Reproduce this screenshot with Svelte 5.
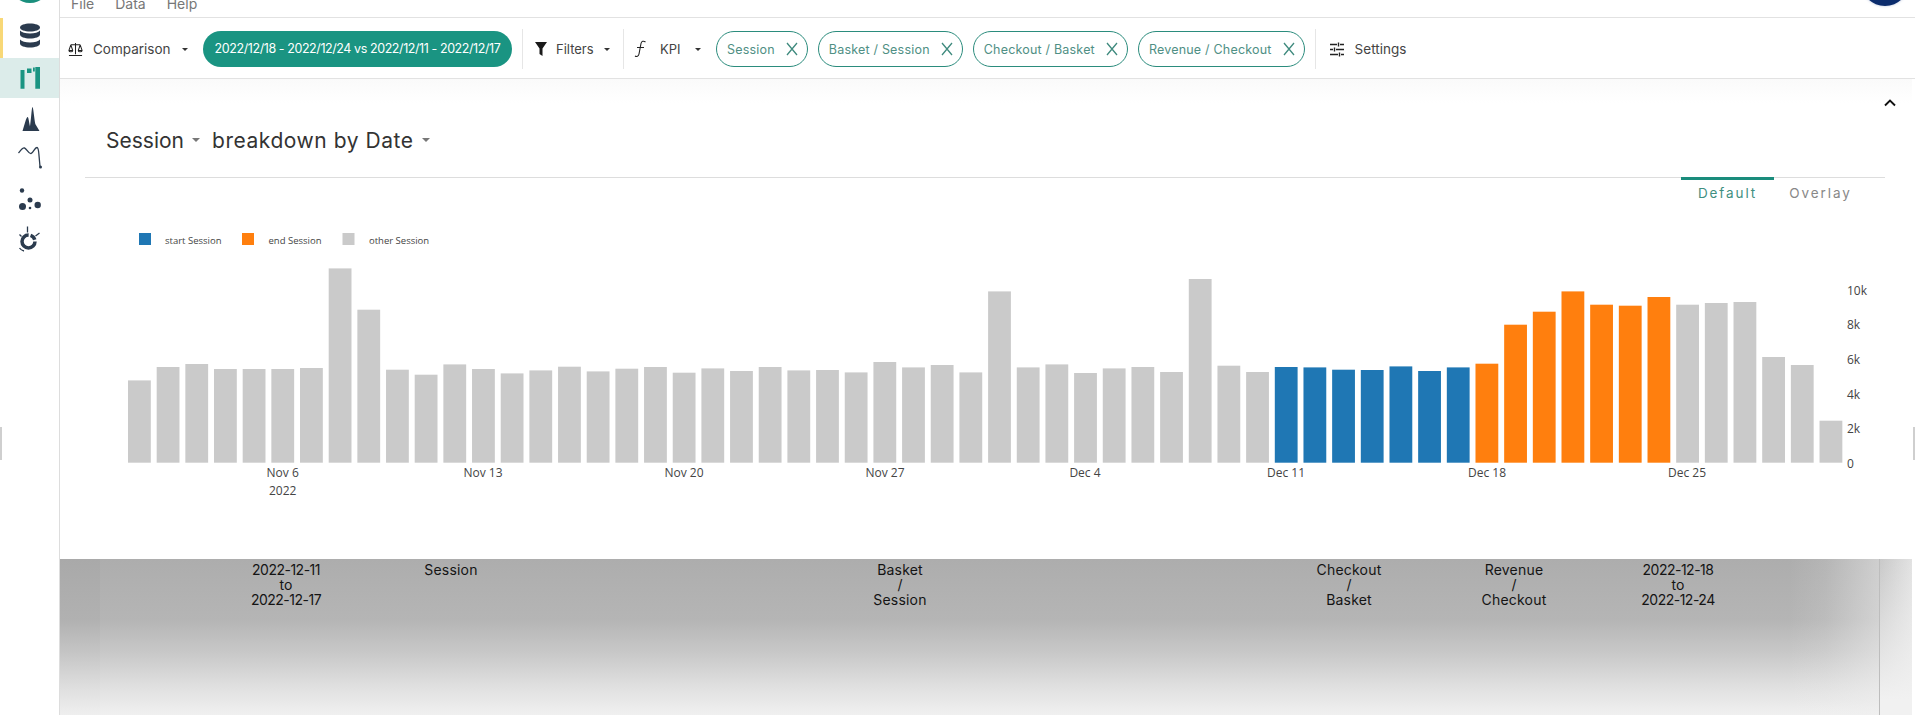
<script>
  const h = [82.3,95.7,98.7,93.7,93.7,93.7,94.7,194.3,153,93,88,98.3,93.7,89.3,92.3,96,91.3,94,95.7,90,94.3,91.7,95.7,92.3,92.7,90.3,100.7,95.3,97.7,90.3,171.3,95.3,98.3,89.7,94.3,95.7,90.7,183.7,97,90.7,95.7,95.3,93,92.7,96.3,91.7,95.3,99,138,151,171.3,158,157,165.7,158,159.7,160.7,105.7,97.7,42];
  const base = 462.7;
  const bars = h.map((v, i) => ({
    x: 128 + i * 28.67,
    y: base - v,
    h: v,
    c: i >= 40 && i <= 46 ? 'blue' : i >= 47 && i <= 53 ? 'orange' : 'grey'
  }));
  const xticks = [['Nov 6', 282.7], ['Nov 13', 483], ['Nov 20', 684], ['Nov 27', 885], ['Dec 4', 1085], ['Dec 11', 1286], ['Dec 18', 1487], ['Dec 25', 1687]];
  const yticks = [['10k', 290], ['8k', 324.7], ['6k', 359.4], ['4k', 394.1], ['2k', 428.8], ['0', 463.5]];
  const chips = ['Session', 'Basket / Session', 'Checkout / Basket', 'Revenue / Checkout'];
  const headers = [['2022-12-11', 'to', '2022-12-17'], ['Session'], ['Basket', '/', 'Session'], ['Checkout', '/', 'Basket'], ['Revenue', '/', 'Checkout'], ['2022-12-18', 'to', '2022-12-24']];
</script>

<div class="page">
  <nav class="side">
    <div class="logo"><span class="logo-disc"></span></div>
    <div class="item marked">
      <svg viewBox="0 18 60 40" class="ic">
        <path class="navy" d="M20 27.5c0-2.4 4.5-4 10-4s10 1.600 10 4-4.500 4-10 4-10-1.600-10-4z"/>
        <path class="navy" d="M20 30.500c1.500 2 5.500 3 10 3s8.500-1 10-3v4c0 2.400-4.500 4-10 4s-10-1.600-10-4z"/>
        <path class="navy" d="M20 39.500c1.500 2 5.500 3 10 3s8.500-1 10-3v4c0 2.400-4.500 4-10 4s-10-1.600-10-4z"/>
      </svg>
    </div>
    <div class="item active">
      <svg viewBox="0 58 60 40" class="ic">
        <path class="teal" d="M20.500 70h4v18.700h-4zM27 68.500h4.500v4.500H27zM33 67.500h1.800v4H33zM35.300 67h4.700v21.700h-4.700z"/>
      </svg>
    </div>
    <div class="item">
      <svg viewBox="0 98 60 40" class="ic">
        <path class="navy" d="M22.500 131l2.700-9c1-3.500 1.800-5 2.500-5 .7 0 1.200 4 2.300 9.500 .9-5 1.700-19.500 2.500-19.500 .8 0 1.800 12 2.800 17l4.200 7z"/>
      </svg>
    </div>
    <div class="item">
      <svg viewBox="0 138 60 40" class="ic">
        <path class="thin" d="M18.500 153c2-2.500 4-5.500 6-5 2.200.6 4 6 6.500 5.500 2.500-.5 3.500-6 6-6 1.500 0 1.700 4 2 8l1 11"/>
        <circle class="navy" cx="40.500" cy="167" r="1.500"/>
      </svg>
    </div>
    <div class="item">
      <svg viewBox="0 178 60 40" class="ic">
        <circle class="navy" cx="22" cy="190.500" r="2.200"/>
        <circle class="navy" cx="22.500" cy="206.500" r="3.500"/>
        <circle class="navy" cx="30" cy="200" r="2.500"/>
        <circle class="navy" cx="30" cy="208" r="1.300"/>
        <circle class="navy" cx="37.700" cy="205" r="3.200"/>
      </svg>
    </div>
    <div class="item">
      <svg viewBox="0 218 60 40" class="ic">
        <circle class="ring" cx="28.500" cy="241.500" r="6.500"/>
        <path class="thin" d="M27.500 226.500v6M35.500 236l4-3M19.500 234.500l2 2M19.500 248c1 1.500 2.500 2.500 4.500 3"/>
      </svg>
    </div>
  </nav>

  <main class="main">
    <div class="menubar">
      <div class="menus"><span>File</span><span>Data</span><span>Help</span></div>
      <span class="avatar"></span>
    </div>

    <div class="toolbar">
      <svg class="tool-ic scale" viewBox="0 0 16 16">
        <path class="line" d="M8 1v12M3 3h10M3 3l-2 6M3 3l2 6M13 3l-2 6M13 3l2 6M1 9c0 2 4 2 4 0zM11 9c0 2 4 2 4 0zM1 14.500h14"/>
      </svg>
      <span class="lbl cmp">Comparison</span>
      <span class="caret"></span>
      <span class="pill">2022/12/18 - 2022/12/24 vs 2022/12/11 - 2022/12/17</span>
      <span class="sep s1"></span>
      <svg class="tool-ic funnel" viewBox="0 0 12 16">
        <path d="M0 1h12L7.500 7.500V15l-3-2V7.500z" fill="#1a1a1a"/>
      </svg>
      <span class="lbl flt">Filters</span>
      <span class="caret"></span>
      <span class="sep s2"></span>
      <svg class="tool-ic fx" viewBox="0 0 13 18">
        <path class="line" d="M11.500 2c-2-1.500-4-.8-4.500 1.500L5 14c-.5 2.500-2.500 3-4 2M3 7.500h7"/>
      </svg>
      <span class="lbl kpi">KPI</span>
      <span class="caret"></span>
      <div class="chips">
        {#each chips as chip}
          <span class="chip">
            <span>{chip}</span>
            <svg class="x" viewBox="0 0 12 14"><path d="M1 1l10 12M11 1L1 13"/></svg>
          </span>
        {/each}
      </div>
      <span class="sep s3"></span>
      <svg class="tool-ic sliders" viewBox="0 0 14 15">
        <path class="line bold" d="M0 2.500h7M10 2.500h4M8.500 .5v4M0 7.500h3M6 7.500h8M4.500 5.500v4M0 12.500h8M11 12.500h3M9.500 10.500v4"/>
      </svg>
      <span class="lbl set">Settings</span>
    </div>

    <section class="panel">
      <div class="collapse">
        <svg viewBox="0 0 12 8"><path d="M1 6.500l5-5 5 5"/></svg>
      </div>
      <div class="title">
        <span>Session</span><span class="tcaret"></span>
        <span class="second">breakdown by Date</span><span class="tcaret"></span>
      </div>
      <div class="divider"></div>
      <div class="tabs">
        <span class="tab on">Default</span>
        <span class="tab">Overlay</span>
      </div>
      <svg class="chart" viewBox="60 211 1855 348">
        <rect class="blue" x="139" y="233" width="12" height="12"/>
        <text class="leg" x="165" y="243.500">start Session</text>
        <rect class="orange" x="242" y="233" width="12" height="12"/>
        <text class="leg" x="268.500" y="243.500">end Session</text>
        <rect class="grey" x="342.500" y="233" width="12" height="12"/>
        <text class="leg" x="369" y="243.500">other Session</text>
        {#each bars as b}
          <rect class={b.c} x={b.x} y={b.y} width="22.800" height={b.h}/>
        {/each}
        {#each xticks as t}
          <text class="tick" x={t[1]} y="477" text-anchor="middle">{t[0]}</text>
        {/each}
        <text class="tick" x="282.700" y="494.500" text-anchor="middle">2022</text>
        {#each yticks as t}
          <text class="tick" x="1847" y={t[1] + 4.500}>{t[0]}</text>
        {/each}
      </svg>
    </section>

    <div class="backdrop">
      <div class="strip-l"></div>
      <div class="heads">
        {#each headers as lines}
          <div class="head">
            {#each lines as l}<div class:date={/\d/.test(l)}>{l}</div>{/each}
          </div>
        {/each}
      </div>
      <div class="strip-r"></div>
    </div>
  </main>

  <span class="handle hl"></span>
  <span class="handle hr"></span>
</div>

<style>
  :global(body) { margin: 0; background: #fff; }
  .page {
    position: relative;
    display: flex;
    width: 1918px;
    height: 715px;
    overflow: hidden;
    background: #fff;
    font-family: Inter, "Noto Sans", sans-serif;
    color: #333;
  }
  .side { width: 60px; flex: none; display: flex; flex-direction: column; }
  .logo { height: 18px; overflow: hidden; }
  .logo-disc { display: block; width: 40px; height: 40px; margin: -37px 0 0 10px; border-radius: 50%; background: #1a8f7d; }
  .item { height: 40px; }
  .item.marked { box-shadow: inset 3px 0 0 #f8d877; }
  .item.active { background: #dcecea; }
  .ic { display: block; width: 60px; height: 40px; }
  .navy { fill: #2b3b4e; }
  .teal { fill: #1a9482; }
  .thin { fill: none; stroke: #2b3b4e; stroke-width: 1.3; }
  .ring { fill: none; stroke: #2b3b4e; stroke-width: 3.5; stroke-dasharray: 30 2 6 3; }

  .main { flex: none; width: 1855px; display: flex; flex-direction: column; border-left: 1px solid #ddd; margin-left: -1px; height: 715px; }
  .menubar { height: 17px; flex: none; border-bottom: 1px solid #e2e2e2; display: flex; justify-content: space-between; overflow: hidden; }
  .menus { display: flex; gap: 21px; margin: -4px 0 0 11px; line-height: 16px; font-size: 14px; color: #777; height: 21px; }
  .avatar { width: 48px; height: 48px; border-radius: 50%; background: #0b2c6c; margin: -42px 6px 0 0; box-shadow: 0 0 3px #b8c4dc; }

  .toolbar { height: 58px; padding-top: 2px; flex: none; display: flex; align-items: center; border-bottom: 1px solid #e2e2e2; }
  .tool-ic { flex: none; display: block; }
  .line { fill: none; stroke: #222; stroke-width: 1.1; }
  .line.bold { stroke-width: 1.4; }
  .scale { width: 15px; height: 15px; margin-left: 8px; }
  .lbl { font-size: 13.500px; color: #444; white-space: nowrap; flex: none; }
  .cmp { margin-left: 10px; width: 79px; }
  .caret { flex: none; width: 0; height: 0; border-left: 3px solid transparent; border-right: 3px solid transparent; border-top: 3.500px solid #333; }
  .cmp + .caret { margin-left: 10px; }
  .pill { flex: none; margin-left: 15px; width: 309px; height: 36px; border-radius: 18px; background: #1a9482; color: #fff; font-size: 12.500px; line-height: 36px; text-align: center; white-space: nowrap; letter-spacing: -0.42px; }
  .sep { flex: none; width: 1px; height: 40px; background: #e6e6e6; }
  .s1 { margin-left: 10px; }
  .funnel { width: 12px; height: 16px; margin-left: 12px; }
  .flt { margin-left: 9px; width: 38px; font-size: 13px; }
  .flt + .caret { margin-left: 10px; }
  .s2 { margin-left: 13px; }
  .fx { width: 13px; height: 18px; margin-left: 10px; }
  .kpi { margin-left: 13px; width: 22px; font-size: 13px; }
  .kpi + .caret { margin-left: 13px; }
  .chips { display: flex; gap: 10px; margin-left: 15px; flex: none; }
  .chip { flex: none; height: 34px; display: flex; align-items: center; gap: 11px; padding: 0 9px 0 10px; border: 1px solid #2b8c7d; border-radius: 18px; font-size: 12.500px; letter-spacing: 0.2px; color: #4f8f84; white-space: nowrap; }
  .x { width: 12px; height: 14px; flex: none; }
  .x path { fill: none; stroke: #3f8a7e; stroke-width: 1.300; }
  .s3 { margin-left: 10px; }
  .sliders { width: 14px; height: 15px; margin-left: 14px; }
  .set { margin-left: 11px; font-size: 13.500px; }

  .panel { height: 480px; flex: none; background: linear-gradient(#fafafa, #fff 24px); display: flex; flex-direction: column; margin-right: 3px; }
  .collapse { height: 48px; display: flex; justify-content: flex-end; align-items: center; padding-right: 16px; flex: none; }
  .collapse svg { width: 12px; height: 8px; display: block; }
  .collapse path { fill: none; stroke: #111; stroke-width: 1.900; }
  .title { height: 26px; flex: none; margin-bottom: 24px; padding-left: 46px; display: flex; align-items: center; font-size: 21px; color: #333; }
  .second { margin-left: 12px; letter-spacing: 0.55px; }
  .tcaret { width: 0; height: 0; margin-left: 8px; border-left: 4.500px solid transparent; border-right: 4.500px solid transparent; border-top: 4.500px solid #777; }
  .divider { height: 1px; flex: none; background: #ddd; margin: 0 27px 0 25px; }
  .tabs { display: flex; justify-content: flex-end; padding-right: 45px; margin-top: -1px; flex: none; height: 34px; }
  .tab { width: 93px; height: 31px; border-top: 3px solid transparent; text-align: center; line-height: 26px; font-size: 13.500px; letter-spacing: 1.900px; color: #888; }
  .tab.on { border-top-color: #1a8c7c; color: #3f8f80; }
  .chart { display: block; width: 1855px; height: 348px; flex: none; }
  .blue { fill: #1f77b4; }
  .orange { fill: #ff7f0e; }
  .grey { fill: #cacaca; }
  .leg { font-family: "Open Sans", sans-serif; font-size: 9.500px; fill: #444; }
  .tick { font-family: "Open Sans", sans-serif; font-size: 12px; fill: #444; }

  .backdrop { flex: 1; display: flex; min-height: 0; }
  .strip-l { width: 40px; flex: none; background: linear-gradient(#a9a9a9, #b1b1b1 39%, #c5c5c5 60%, #dedede 82%, #efefef); }
  .heads {
    flex: 1;
    position: relative;
    display: grid;
    grid-template-columns: 180px 150px 748px 150px 180px 148px;
    padding: 3px 0 0 96px;
    align-content: start;
    background: linear-gradient(#adadad, #b5b5b5 39%, #c8c8c8 60%, #e0e0e0 82%, #f0f0f0);
    font-size: 14px;
    line-height: 15px;
    letter-spacing: 0.2px;
    color: #141414;
    text-align: center;
  }
  .date { letter-spacing: -0.5px; }
  .heads::after { content: ""; position: absolute; top: 0; right: 0; bottom: 0; width: 90px; background: linear-gradient(to right, rgba(240,240,240,0), rgba(240,240,240,.12) 40%, rgba(240,240,240,.5)); }
  .strip-r { width: 32px; flex: none; margin-right: 3px; border-left: 1px solid #bdbdbd; background: linear-gradient(rgba(240,240,240,0), #f1f1f1 90%), linear-gradient(to right, #c9c9c9, #e2e2e2); }
  .handle { position: absolute; top: 427px; width: 2px; height: 33px; background: #cfcfcf; }
  .hl { left: 0; }
  .hr { left: 1913px; }
</style>
